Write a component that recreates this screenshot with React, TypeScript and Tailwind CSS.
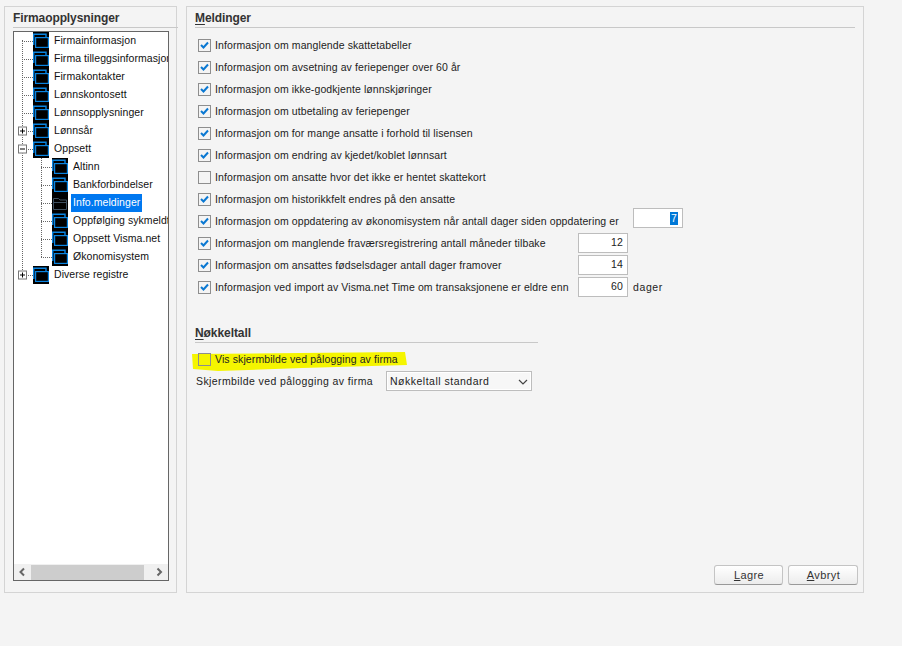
import React from 'react';

const FONT = "font-['Liberation_Sans',Arial,sans-serif]";

const FolderIcon = ({ open }: { open?: boolean }) => (
  <svg width="16" height="18" viewBox="0 0 16 18" className="shrink-0">
    <rect width="16" height="18" fill="#000" />
    {open ? (
      <path d="M1.5 15.5V4.5H6.5L8 6H14.5V15.5ZM1.5 8.5H14.5" fill="none" stroke="#3f5060" strokeWidth="1" />
    ) : (
      <>
        <path d="M0.7 13V2.2H13V5" fill="none" stroke="#0a84e0" strokeWidth="1.4" />
        <rect x="2.6" y="5.6" width="12.8" height="9.8" fill="#000" stroke="#0a84e0" strokeWidth="1.2" />
      </>
    )}
  </svg>
);

const Expander = ({ open }: { open?: boolean }) => (
  <span className="absolute left-[4px] top-1/2 -translate-y-1/2 flex h-[9px] w-[9px] items-center justify-center border border-[#777] bg-white z-10">
    <span className="absolute h-px w-[5px] bg-black" />
    {!open && <span className="absolute h-[5px] w-px bg-black" />}
  </span>
);

type Node = { label: string; level: 0 | 1; exp?: 'plus' | 'minus'; selected?: boolean };

const nodes: Node[] = [
  { label: 'Firmainformasjon', level: 0 },
  { label: 'Firma tilleggsinformasjon', level: 0 },
  { label: 'Firmakontakter', level: 0 },
  { label: 'Lønnskontosett', level: 0 },
  { label: 'Lønnsopplysninger', level: 0 },
  { label: 'Lønnsår', level: 0, exp: 'plus' },
  { label: 'Oppsett', level: 0, exp: 'minus' },
  { label: 'Altinn', level: 1 },
  { label: 'Bankforbindelser', level: 1 },
  { label: 'Info.meldinger', level: 1, selected: true },
  { label: 'Oppfølging sykmeldte', level: 1 },
  { label: 'Oppsett Visma.net', level: 1 },
  { label: 'Økonomisystem', level: 1 },
  { label: 'Diverse registre', level: 0, exp: 'plus' },
];

const TreeRow = ({ node }: { node: Node }) => (
  <div className={`relative flex h-[18px] items-center whitespace-nowrap ${node.level === 1 ? 'pl-[38px]' : 'pl-[19px]'}`}>
    <span className={`absolute top-1/2 h-px border-t border-dotted border-[#666] ${node.level === 1 ? 'left-[27px] w-[11px]' : 'left-[8px] w-[11px]'}`} />
    {node.exp && <Expander open={node.exp === 'minus'} />}
    <span className="relative"><FolderIcon open={node.selected} /></span>
    <span className={`ml-[3px] flex h-[18px] items-center px-[2px] ${node.selected ? 'bg-[#0078f0] text-white' : 'text-[#111]'}`}>
      {node.label}
    </span>
  </div>
);

const Check = ({ checked }: { checked: boolean }) => (
  <span className="flex h-[13px] w-[13px] shrink-0 items-center justify-center border border-[#8e8e8e] bg-transparent">
    {checked && (
      <svg width="9" height="8" viewBox="0 0 9 8">
        <path d="M1 4L3.5 6.5L8 1.5" fill="none" stroke="#0a78d2" strokeWidth="2" />
      </svg>
    )}
  </span>
);

const Num = ({ value, selected, className = '' }: { value: string; selected?: boolean; className?: string }) => (
  <span className={`flex h-[20px] w-[50px] shrink-0 items-center justify-end border border-[#bdbdbd] bg-white pr-[4px] text-[#222] ${className}`}>
    {selected ? <span className="bg-[#0078d7] px-px leading-[13px] text-white">{value}</span> : value}
  </span>
);

type Msg = { text: string; checked?: boolean; labelW?: string; input?: React.ReactNode };

const messages: Msg[] = [
  { text: 'Informasjon om manglende skattetabeller', checked: true },
  { text: 'Informasjon om avsetning av feriepenger over 60 år', checked: true },
  { text: 'Informasjon om ikke-godkjente lønnskjøringer', checked: true },
  { text: 'Informasjon om utbetaling av feriepenger', checked: true },
  { text: 'Informasjon om for mange ansatte i forhold til lisensen', checked: true },
  { text: 'Informasjon om endring av kjedet/koblet lønnsart', checked: true },
  { text: 'Informasjon om ansatte hvor det ikke er hentet skattekort', checked: false },
  { text: 'Informasjon om historikkfelt endres på den ansatte', checked: true },
  {
    text: 'Informasjon om oppdatering av økonomisystem når antall dager siden oppdatering er',
    checked: true,
    labelW: 'w-[418px]',
    input: <Num value="7" selected className="-translate-y-[3px]" />,
  },
  { text: 'Informasjon om manglende fraværsregistrering antall måneder tilbake', checked: true, labelW: 'w-[363px]', input: <Num value="12" /> },
  { text: 'Informasjon om ansattes fødselsdager antall dager framover', checked: true, labelW: 'w-[363px]', input: <Num value="14" /> },
  {
    text: 'Informasjon ved import av Visma.net Time om transaksjonene er eldre enn',
    checked: true,
    labelW: 'w-[363px]',
    input: (
      <>
        <Num value="60" />
        <span className="ml-[5px] pt-[2px] tracking-[0.6px]">dager</span>
      </>
    ),
  },
];

const SectionTitle = ({ first, rest, className = '' }: { first: string; rest: string; className?: string }) => (
  <div className={`border-b border-[#c8c8c8] pb-px text-[12px] leading-[15px] font-bold tracking-[-0.08px] text-[#333] ${className}`}>
    <span className="underline underline-offset-2">{first}</span>
    {rest}
  </div>
);

const Button = ({ first, rest, className = '' }: { first: string; rest: string; className?: string }) => (
  <button className={`h-[20px] rounded-[3px] border border-[#c4c4c4] border-b-[#999] bg-gradient-to-b from-white to-[#ececec] pl-px text-[11px] tracking-[0.4px] text-[#333] ${className}`}>
    <span className="underline">{first}</span>
    {rest}
  </button>
);

export default function App() {
  return (
    <div className={`${FONT} flex h-[646px] w-[902px] items-start gap-[9px] overflow-hidden bg-[#f4f4f4] pt-[6px] pl-[4px] text-[10.5px] tracking-[0.1px] text-[#222]`}>
      {/* tree panel */}
      <div className="h-[587px] w-[173px] shrink-0 border border-[#d4d4d4] pl-[8px] pt-[4px]">
        <div className="w-[165px] border-b border-[#c8c8c8] pb-px text-[12px] leading-[15px] font-bold tracking-[-0.1px] text-[#333]">Firmaopplysninger</div>
        <div className="mt-[3px] flex h-[550px] w-[156px] flex-col border border-[#666] bg-white tracking-[0.06px]">
          <div className="relative flex-1 overflow-hidden">
            <span className="absolute left-[8px] top-[8px] h-[236px] border-l border-dotted border-[#666]" />
            <span className="absolute left-[27px] top-[125px] h-[100px] border-l border-dotted border-[#666]" />
            {nodes.map((n) => (
              <TreeRow key={n.label} node={n} />
            ))}
          </div>
          <div className="flex h-[16px] items-center bg-[#f0f0f0]">
            <svg width="17" height="16" viewBox="0 0 17 16" className="shrink-0">
              <path d="M10 4.5L6.5 8L10 11.5" fill="none" stroke="#666" strokeWidth="2" />
            </svg>
            <div className="h-[15px] w-[113px] bg-[#cdcdcd]" />
            <div className="flex-1" />
            <svg width="17" height="16" viewBox="0 0 17 16" className="shrink-0">
              <path d="M6.5 4.5L10 8L6.5 11.5" fill="none" stroke="#666" strokeWidth="2" />
            </svg>
          </div>
        </div>
      </div>

      {/* settings panel */}
      <div className="flex h-[587px] w-[678px] shrink-0 flex-col border border-[#d4d4d4] pl-[8px] pt-[4px] pr-[5px] pb-[7px]">
        <SectionTitle first="M" rest="eldinger" className="mr-[3px]" />
        <div className="mt-[6px] flex flex-col pl-[3px]">
          {messages.map((m) => (
            <div key={m.text} className="flex h-[22px] items-center">
              <Check checked={!!m.checked} />
              <span className={`ml-[4px] whitespace-nowrap pt-[2px] ${m.labelW ?? ''}`}>{m.text}</span>
              {m.input}
            </div>
          ))}
        </div>

        <div className="relative mt-[28px] w-[343px]">
          <SectionTitle first="N" rest="økkeltall" />
          <svg width="220" height="20" viewBox="0 0 220 20" className="absolute left-[-5px] top-[27px] overflow-visible">
            <path d="M2 1L110 0L215 -1L217 12L112 15L28 18L3 16Z" fill="#f5f500" />
          </svg>
          <div className="relative mt-[5px] flex h-[22px] items-center pl-[3px]">
            <Check checked={false} />
            <span className="ml-[4px] whitespace-nowrap pt-[2px]">Vis skjermbilde ved pålogging av firma</span>
          </div>
          <div className="flex h-[22px] items-center pl-px">
            <span className="w-[190px] whitespace-nowrap pt-[2px] tracking-[0.4px]">Skjermbilde ved pålogging av firma</span>
            <span className="flex h-[20px] w-[146px] shrink-0 items-center justify-between border border-[#bdbdbd] bg-[#f7f7f7] pl-[3px] pr-[3px] pt-[2px] tracking-[0.5px] shadow-[inset_0_0_0_1px_#fff]">
              Nøkkeltall standard
              <svg width="10" height="6" viewBox="0 0 10 6">
                <path d="M1 1L5 5L9 1" fill="none" stroke="#444" strokeWidth="1.2" />
              </svg>
            </span>
          </div>
        </div>

        <div className="mt-auto flex justify-end gap-[5px]">
          <Button first="L" rest="agre" className="w-[69px]" />
          <Button first="A" rest="vbryt" className="w-[70px]" />
        </div>
      </div>
    </div>
  );
}
